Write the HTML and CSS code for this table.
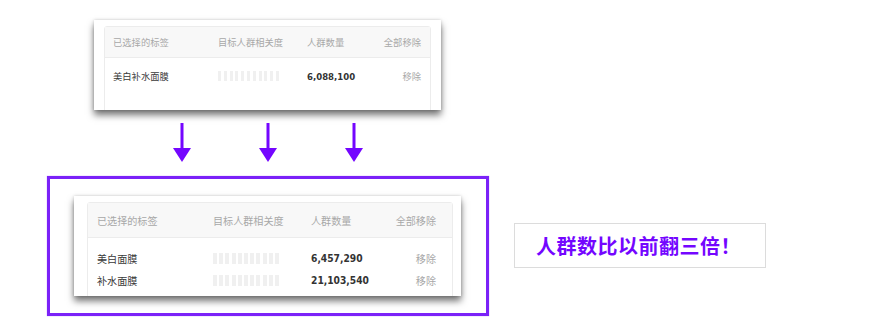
FILE: index.html
```html
<!DOCTYPE html>
<html lang="zh">
<head>
<meta charset="utf-8">
<title>人群数比以前翻三倍</title>
<link rel="stylesheet" href="styles.css">
</head>
<body>
<div class="page">
  <div class="card card-sm">
    <div class="tbl">
      <div class="grid head">
        <span>已选择的标签</span>
        <span>目标人群相关度</span>
        <span>人群数量</span>
        <span class="r">全部移除</span>
      </div>
      <div class="grid row">
        <span class="name">美白补水面膜</span>
        <span class="bars"><i></i><i></i><i></i><i></i><i></i><i></i><i></i><i></i><i></i><i></i><i></i></span>
        <span class="num">6,088,100</span>
        <span class="r rm">移除</span>
      </div>
    </div>
  </div>

  <div class="arrows">
    <svg viewBox="0 0 20 40" width="20" height="40"><rect x="8.5" y="0" width="3" height="28" fill="#7406ff"/><path d="M1 25 L19 25 L10 39 Z" fill="#7406ff"/></svg>
    <svg viewBox="0 0 20 40" width="20" height="40"><rect x="8.5" y="0" width="3" height="28" fill="#7406ff"/><path d="M1 25 L19 25 L10 39 Z" fill="#7406ff"/></svg>
    <svg viewBox="0 0 20 40" width="20" height="40"><rect x="8.5" y="0" width="3" height="28" fill="#7406ff"/><path d="M1 25 L19 25 L10 39 Z" fill="#7406ff"/></svg>
  </div>

  <div class="bottom">
    <div class="frame">
      <div class="card card-lg">
        <div class="tbl">
          <div class="grid head">
            <span>已选择的标签</span>
            <span>目标人群相关度</span>
            <span>人群数量</span>
            <span class="r">全部移除</span>
          </div>
          <div class="rows">
            <div class="grid row">
              <span class="name">美白面膜</span>
              <span class="bars"><i></i><i></i><i></i><i></i><i></i><i></i><i></i><i></i><i></i><i></i><i></i></span>
              <span class="num">6,457,290</span>
              <span class="r rm">移除</span>
            </div>
            <div class="grid row">
              <span class="name">补水面膜</span>
              <span class="bars"><i></i><i></i><i></i><i></i><i></i><i></i><i></i><i></i><i></i><i></i><i></i></span>
              <span class="num">21,103,540</span>
              <span class="r rm">移除</span>
            </div>
          </div>
        </div>
      </div>
    </div>
    <div class="note">人群数比以前翻三倍！</div>
  </div>
</div>
</body>
</html>
```

FILE: styles.css
```css
html, body {
  margin: 0;
  padding: 0;
  background: #fff;
}
body {
  font-family: "Noto Sans CJK SC", "Noto Sans", sans-serif;
  width: 886px;
  height: 330px;
  overflow: hidden;
}
.page {
  padding-top: 20px;
}
.card {
  background: #fff;
  overflow: hidden;
  box-sizing: border-box;
  box-shadow: 0 5px 7px rgba(0, 0, 0, 0.55), 0 0 3px rgba(0, 0, 0, 0.18);
}
.tbl {
  border: 1px solid #ececec;
  border-radius: 3px;
  height: 200px;
  box-sizing: border-box;
}
.grid {
  display: grid;
  align-items: center;
}
.grid span {
  white-space: nowrap;
}
.r {
  text-align: right;
}
.head {
  background: #f8f8f8;
  border-bottom: 1px solid #ececec;
  color: #a8a8a8;
}
.name {
  color: #3a3a3a;
}
.rm {
  color: #a8a8a8;
}
.num {
  font-family: "DejaVu Sans Condensed", "DejaVu Sans", sans-serif;
  font-stretch: condensed;
  font-weight: bold;
  color: #333;
}
.bars {
  display: flex;
  align-items: center;
}
.bars i {
  display: block;
  background: #f0f0f0;
}

/* top card */
.card-sm {
  margin-left: 94px;
  width: 347px;
  height: 90px;
  padding: 6px 10px 0 10px;
  font-size: 9.3px;
}
.card-sm .grid {
  grid-template-columns: 105px 89px 1fr auto;
  padding: 0 9px 0 8px;
}
.card-sm .head {
  height: 30px;
}
.card-sm .row {
  height: 36px;
}
.card-sm .num {
  font-size: 9.5px;
}
.card-sm .bars {
  gap: 2.8px;
}
.card-sm .bars i {
  width: 3px;
  height: 10px;
}

/* arrows */
.arrows {
  display: flex;
  gap: 66px;
  padding-left: 172px;
  margin-top: 13px;
  height: 40px;
}
.arrows svg {
  display: block;
}

/* bottom */
.bottom {
  display: flex;
  align-items: flex-start;
  margin-top: 13px;
}
.frame {
  margin-left: 47px;
  border: 3px solid #7b22f8;
  box-shadow: 0 0 1px rgba(123, 34, 248, 0.5);
  padding: 17px 25px 17px 24px;
}
.card-lg {
  width: 387px;
  height: 100px;
  padding: 6px 8px 0 13px;
  font-size: 10.1px;
}
.card-lg .grid {
  grid-template-columns: 116px 98px 1fr auto;
  padding: 0 16px 0 9px;
}
.card-lg .head {
  height: 34px;
}
.card-lg .rows {
  padding-top: 9px;
}
.card-lg .row {
  height: 22px;
}
.card-lg .num {
  font-size: 10.2px;
}
.card-lg .bars {
  gap: 2.2px;
}
.card-lg .bars i {
  width: 4px;
  height: 11px;
}
.note {
  margin-left: 25px;
  margin-top: 47px;
  width: 252px;
  height: 45px;
  box-sizing: border-box;
  border: 1px solid #dcdcdc;
  display: flex;
  align-items: center;
  padding-left: 21px;
  color: #7406ff;
  font-size: 20px;
  font-weight: bold;
  letter-spacing: 0.5px;
}
```
